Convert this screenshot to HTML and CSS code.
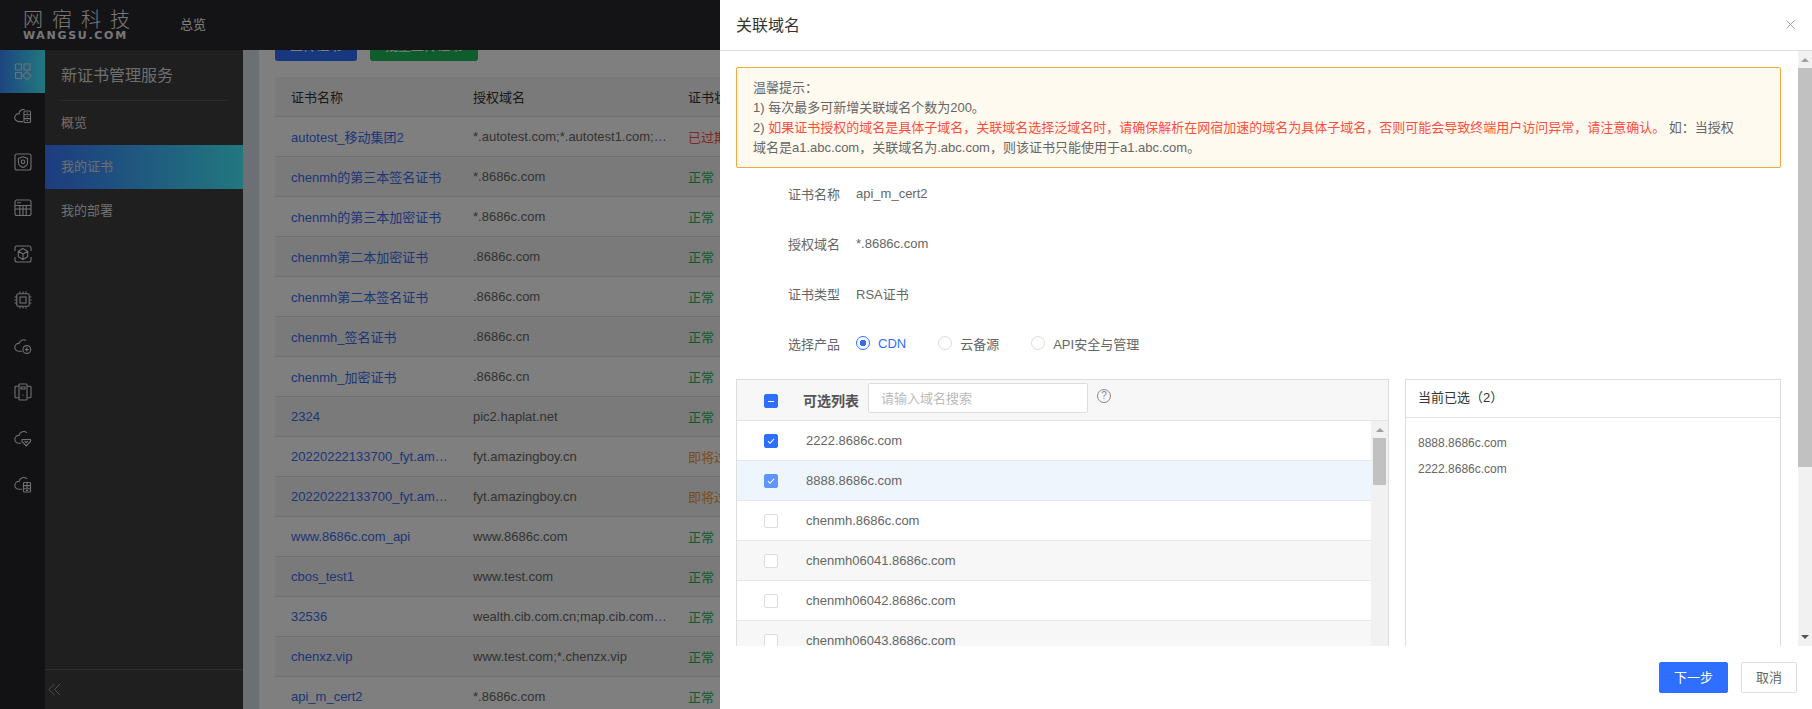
FILE: index.html
```html
<!DOCTYPE html>
<html lang="zh-CN">
  <head>
    <meta charset="UTF-8" />
    <title>关联域名</title>
    <link rel="stylesheet" href="styles.css">
  </head>
  <body>
    <div class="topbar">
      <div class="logo">
        <div class="logo-cn">网宿科技</div>
        <div class="logo-en">WANGSU.COM</div>
      </div>
      <div class="top-link">总览</div>
    </div>

    <div class="layout">
      <!-- Icon rail -->
      <div class="rail">
        <div class="rail-item active">
          <svg viewBox="0 0 18 18"><rect x="1.5" y="1" width="6" height="6" rx=".6"/><rect x="10" y="1" width="6" height="6" rx=".6"/><rect x="1.5" y="9.5" width="6" height="6" rx=".6"/><path d="M13 8.6l4.2 4.2-4.2 4.2-4.2-4.2z"/></svg>
        </div>
        <div class="rail-item">
          <svg viewBox="0 0 18 18"><path d="M10.5 2.6A4.4 4.4 0 0 0 5 6.6a4 4 0 0 0-.6 8H9"/><rect x="10" y="4" width="6.5" height="11.5" rx="1"/><path d="M10 7.8h6.5M10 11.6h6.5M12.5 6h1.5M12.5 9.7h1.5M12.5 13.5h1.5"/></svg>
        </div>
        <div class="rail-item">
          <svg viewBox="0 0 18 18"><rect x="1" y="1" width="16" height="16" rx="2"/><path d="M9 3.8l4.6 1.6v3.8c0 2.6-2 4.2-4.6 5.2-2.6-1-4.6-2.6-4.6-5.2V5.4z"/><circle cx="9" cy="8.8" r="1.8"/></svg>
        </div>
        <div class="rail-item">
          <svg viewBox="0 0 18 18"><rect x="1" y="1" width="16" height="15.5" rx="2"/><path d="M1 6.5h16M1 10h16M3 3.7h4M5.8 6.5v10M9 6.5v10M12.2 6.5v10"/></svg>
        </div>
        <div class="rail-item">
          <svg viewBox="0 0 18 18"><path d="M1 6V3a2 2 0 0 1 2-2h12a2 2 0 0 1 2 2v3M1 12v3a2 2 0 0 0 2 2h12a2 2 0 0 0 2-2v-3"/><path d="M9 3.5l4.7 2.7v5.5L9 14.5l-4.7-2.8V6.2zM4.3 6.2L9 9l4.7-2.8M9 9v5.5"/></svg>
        </div>
        <div class="rail-item">
          <svg viewBox="0 0 18 18"><rect x="2.8" y="2.8" width="12.4" height="12.4" rx="1.5"/><rect x="6" y="6" width="6" height="6"/><path d="M6 .5v2.3M9 .5v2.3M12 .5v2.3M6 15.2v2.3M9 15.2v2.3M12 15.2v2.3M.5 6h2.3M.5 9h2.3M.5 12h2.3M15.2 6h2.3M15.2 9h2.3M15.2 12h2.3"/></svg>
        </div>
        <div class="rail-item">
          <svg viewBox="0 0 18 18"><path d="M12 3.4A4.8 4.8 0 0 0 5 6.4a3.9 3.9 0 0 0-.5 7.8H8"/><circle cx="12.8" cy="12.5" r="3.9"/><path d="M12.8 10.5v4M10.8 12.5h4"/></svg>
        </div>
        <div class="rail-item">
          <svg viewBox="0 0 18 18"><rect x="5" y="1" width="8" height="16" rx=".8"/><path d="M5 3.2H2a1 1 0 0 0-1 1v9.6a1 1 0 0 0 1 1h3M13 3.2h3a1 1 0 0 1 1 1v9.6a1 1 0 0 1-1 1h-3"/><path d="M7 4h4v2H7zM9 11.5v1"/></svg>
        </div>
        <div class="rail-item">
          <svg viewBox="0 0 18 18"><path d="M13 3.8A4.8 4.8 0 0 0 5 6.4a3.9 3.9 0 0 0-.5 7.8H7"/><path d="M8 10.5h8.500v2L12.200 17 8 12.500zM10.600 11.800l1.600 1.800 1.700-1.800"/></svg>
        </div>
        <div class="rail-item">
          <svg viewBox="0 0 18 18"><path d="M13 3.8A4.8 4.8 0 0 0 5 6.4a3.9 3.9 0 0 0-.5 7.8H8"/><rect x="9.5" y="7.5" width="7" height="9.5" rx=".8"/><path d="M9.5 10.6h7M9.5 13.8h7M12 9h2M12 12.2h2M12 15.4h2"/></svg>
        </div>
      </div>

      <!-- Service menu -->
      <div class="side">
        <div class="side-title">新证书管理服务</div>
        <div class="side-items">
          <div class="side-item">概览</div>
          <div class="side-item active">我的证书</div>
          <div class="side-item">我的部署</div>
        </div>
        <div class="side-foot">
          <svg viewBox="0 0 14 14"><path d="M7 1L1 7l6 6M13 1L7 7l6 6"/></svg>
        </div>
      </div>

      <!-- Certificate list behind the drawer -->
      <div class="main">
        <div class="card">
          <div class="toolbar">
            <div class="tool-btn blue">上传证书</div>
            <div class="tool-btn green">批量上传证书</div>
          </div>
          <table class="cert-table">
            <colgroup>
              <col class="col-name" />
              <col class="col-domain" />
              <col />
            </colgroup>
            <thead>
              <tr><th>证书名称</th><th>授权域名</th><th>证书状态</th></tr>
            </thead>
            <tbody>
              <tr><td class="link">autotest_移动集团2</td><td>*.autotest.com;*.autotest1.com;*.autotest2.com</td><td class="bad">已过期</td></tr>
              <tr><td class="link">chenmh的第三本签名证书</td><td>*.8686c.com</td><td class="ok">正常</td></tr>
              <tr><td class="link">chenmh的第三本加密证书</td><td>*.8686c.com</td><td class="ok">正常</td></tr>
              <tr><td class="link">chenmh第二本加密证书</td><td>.8686c.com</td><td class="ok">正常</td></tr>
              <tr><td class="link">chenmh第二本签名证书</td><td>.8686c.com</td><td class="ok">正常</td></tr>
              <tr><td class="link">chenmh_签名证书</td><td>.8686c.cn</td><td class="ok">正常</td></tr>
              <tr><td class="link">chenmh_加密证书</td><td>.8686c.cn</td><td class="ok">正常</td></tr>
              <tr><td class="link">2324</td><td>pic2.haplat.net</td><td class="ok">正常</td></tr>
              <tr><td class="link">20220222133700_fyt.amazingboy.cn</td><td>fyt.amazingboy.cn</td><td class="warn">即将过期</td></tr>
              <tr><td class="link">20220222133700_fyt.amazingboy.cn</td><td>fyt.amazingboy.cn</td><td class="warn">即将过期</td></tr>
              <tr><td class="link">www.8686c.com_api</td><td>www.8686c.com</td><td class="ok">正常</td></tr>
              <tr><td class="link">cbos_test1</td><td>www.test.com</td><td class="ok">正常</td></tr>
              <tr><td class="link">32536</td><td>wealth.cib.com.cn;map.cib.com.cn;www.cib.com.cn</td><td class="ok">正常</td></tr>
              <tr><td class="link">chenxz.vip</td><td>www.test.com;*.chenzx.vip</td><td class="ok">正常</td></tr>
              <tr><td class="link">api_m_cert2</td><td>*.8686c.com</td><td class="ok">正常</td></tr>
            </tbody>
          </table>
        </div>
      </div>
    </div>

    <div class="overlay"></div>

    <!-- Drawer -->
    <div class="drawer">
      <div class="drawer-head">
        <div class="drawer-title">关联域名</div>
        <svg class="close" viewBox="0 0 10 10"><path d="M.5.5l9 9M9.5.5l-9 9"/></svg>
      </div>

      <div class="drawer-mid">
        <div class="drawer-body">
          <div class="notice">
            温馨提示&#xFF1A;<br>
            1) 每次最多可新增关联域名个数为200。<br>
            2) <span class="notice-red">如果证书授权的域名是具体子域名&#xFF0C;关联域名选择泛域名时&#xFF0C;请确保解析在网宿加速的域名为具体子域名&#xFF0C;否则可能会导致终端用户访问异常&#xFF0C;请注意确认。</span> 如&#xFF1A;当授权<br>
            域名是a1.abc.com&#xFF0C;关联域名为.abc.com&#xFF0C;则该证书只能使用于a1.abc.com。
          </div>

          <div class="form-row"><div class="form-label">证书名称</div><div>api_m_cert2</div></div>
          <div class="form-row"><div class="form-label">授权域名</div><div>*.8686c.com</div></div>
          <div class="form-row"><div class="form-label">证书类型</div><div>RSA证书</div></div>
          <div class="form-row">
            <div class="form-label">选择产品</div>
            <div class="radio-group">
              <div class="radio on"><span class="radio-dot"></span>CDN</div>
              <div class="radio"><span class="radio-dot"></span>云备源</div>
              <div class="radio"><span class="radio-dot"></span>API安全与管理</div>
            </div>
          </div>

          <div class="pickers">
            <div class="picker-left">
              <div class="picker-head">
                <span class="check minus"></span>
                <span class="picker-name">可选列表</span>
                <input class="search" placeholder="请输入域名搜索" />
                <span class="help">?</span>
              </div>
              <div class="picker-list">
                <div class="rows">
                  <div class="row"><span class="check on"><svg viewBox="0 0 14 14"><path d="M3.5 7.2l2.4 2.4 4.6-5"/></svg></span>2222.8686c.com</div>
                  <div class="row hover"><span class="check on soft"><svg viewBox="0 0 14 14"><path d="M3.5 7.2l2.4 2.4 4.6-5"/></svg></span>8888.8686c.com</div>
                  <div class="row"><span class="check"></span>chenmh.8686c.com</div>
                  <div class="row gray"><span class="check"></span>chenmh06041.8686c.com</div>
                  <div class="row"><span class="check"></span>chenmh06042.8686c.com</div>
                  <div class="row gray"><span class="check"></span>chenmh06043.8686c.com</div>
                </div>
                <div class="list-bar">
                  <span class="arrow-up"></span>
                  <span class="list-thumb"></span>
                </div>
              </div>
            </div>

            <div class="picker-right">
              <div class="picked-head">当前已选&#xFF08;2&#xFF09;</div>
              <div class="picked-list">
                <div>8888.8686c.com</div>
                <div>2222.8686c.com</div>
              </div>
            </div>
          </div>
        </div>

        <div class="drawer-bar">
          <span class="arrow-up"></span>
          <span class="drawer-thumb"></span>
          <span class="arrow-down"></span>
        </div>
      </div>

      <div class="drawer-foot">
        <div class="btn primary">下一步</div>
        <div class="btn">取消</div>
      </div>
    </div>
  </body>
</html>
```

FILE: styles.css
```css
* {
  box-sizing: border-box;
}

html,
body {
  height: 100%;
}

body {
  margin: 0;
  overflow: hidden;
  display: flex;
  flex-direction: column;
  font-family: "Liberation Sans", "Noto Sans CJK SC", sans-serif;
  font-size: 13px;
  color: #666;
  background-color: #fff;
}

/* Top bar */
.topbar {
  height: 50px;
  flex-shrink: 0;
  display: flex;
  align-items: center;
  background-color: #28282c;
  color: #fff;
}

.logo {
  width: 180px;
  padding-left: 23px;
}

.logo-cn {
  font-size: 20px;
  font-weight: 300;
  line-height: 20px;
  letter-spacing: 9px;
  color: #eee;
  white-space: nowrap;
}

.logo-en {
  font-family: "DejaVu Sans", sans-serif;
  font-size: 11px;
  font-weight: bold;
  line-height: 11px;
  letter-spacing: 1.7px;
  color: #eee;
  white-space: nowrap;
}

.top-link {
  margin-bottom: 3px;
  font-size: 13px;
}

.layout {
  flex: 1;
  min-height: 0;
  display: flex;
}

/* Icon rail */
.rail {
  width: 45px;
  flex-shrink: 0;
  background-color: #242428;
}

.rail-item {
  height: 46px;
  display: flex;
  align-items: center;
  justify-content: center;
}

.rail-item.active {
  height: 43px;
  background: linear-gradient(90deg, #3a8cff, #44f0ff);
}

.rail-item svg {
  width: 18px;
  height: 18px;
  fill: none;
  stroke: #e0e0e0;
  stroke-width: 1.1;
}

/* Service menu */
.side {
  width: 198px;
  flex-shrink: 0;
  display: flex;
  flex-direction: column;
  background-color: #3e3e3e;
  color: #ddd;
}

.side-title {
  height: 51px;
  margin: 0 16px;
  border-bottom: 1px solid #585858;
  font-size: 16px;
  line-height: 51px;
}

.side-items {
  flex: 1;
}

.side-item {
  height: 44px;
  padding-left: 16px;
  font-size: 13px;
  line-height: 44px;
}

.side-item.active {
  background: linear-gradient(90deg, #3a78ff, #44f0ff);
}

.side-foot {
  height: 40px;
  padding: 13px 0 0 3px;
  border-top: 1px solid #585858;
}

.side-foot svg {
  display: block;
  width: 13px;
  height: 13px;
  fill: none;
  stroke: #aaa;
  stroke-width: 1;
}

/* Certificate list */
.main {
  flex: 1;
  min-width: 0;
  padding-left: 16px;
  overflow: hidden;
  background: linear-gradient(90deg, #d8dfe8, #e8ecf0);
}

.card {
  margin-top: -19px;
  padding: 0 16px;
  background-color: #fff;
}

.toolbar {
  display: flex;
  gap: 13px;
  margin-bottom: 16px;
}

.tool-btn {
  height: 30px;
  border-radius: 3px;
  color: #fff;
  text-align: center;
  line-height: 30px;
}

.tool-btn.blue {
  width: 82px;
  background-color: #2e6fff;
}

.tool-btn.green {
  width: 108px;
  background-color: #1fb85a;
}

.cert-table {
  width: 100%;
  table-layout: fixed;
  border-collapse: separate;
  border-spacing: 0;
}

.col-name {
  width: 182px;
}

.col-domain {
  width: 215px;
}

.cert-table th,
.cert-table td {
  height: 40px;
  padding: 0 6px 0 16px;
  border-bottom: 1px solid #e0e0e0;
  font-weight: normal;
  text-align: left;
  white-space: nowrap;
  overflow: hidden;
  text-overflow: ellipsis;
}

.cert-table td:nth-child(2) {
  padding-right: 2px;
}

.cert-table th {
  background-color: #f5f5f5;
  color: #333;
}

.cert-table tbody tr:nth-child(even) td {
  background-color: #f5f5f5;
}

.cert-table .link {
  color: #3a6cf0;
}

.cert-table .ok {
  color: #22b45c;
}

.cert-table .bad {
  color: #ff4d3c;
}

.cert-table .warn {
  color: #f09a30;
}

/* Dim layer under the drawer */
.overlay {
  position: fixed;
  top: 0;
  left: 0;
  right: 0;
  bottom: 0;
  background-color: rgba(0, 0, 0, 0.5);
}

/* Drawer */
.drawer {
  position: fixed;
  top: 0;
  right: 0;
  bottom: 0;
  width: 1092px;
  display: flex;
  flex-direction: column;
  background-color: #fff;
}

.drawer-head {
  height: 51px;
  flex-shrink: 0;
  display: flex;
  align-items: center;
  justify-content: space-between;
  padding: 0 17px 2px 16px;
  border-bottom: 1px solid #ddd;
}

.drawer-title {
  font-size: 16px;
  color: #333;
}

.close {
  width: 9px;
  height: 9px;
  fill: none;
  stroke: #999;
  stroke-width: 1;
}

.drawer-mid {
  flex: 1;
  min-height: 0;
  display: flex;
}

.drawer-body {
  flex: 1;
  min-width: 0;
  padding: 16px 17px 0 16px;
  overflow: hidden;
}

.drawer-bar {
  width: 14px;
  flex-shrink: 0;
  display: flex;
  flex-direction: column;
  align-items: center;
  background-color: #f1f1f1;
}

.drawer-thumb {
  width: 14px;
  height: 399px;
  margin-top: 6px;
  background-color: #c1c1c1;
}

.arrow-up,
.arrow-down {
  width: 0;
  height: 0;
  border-left: 4px solid transparent;
  border-right: 4px solid transparent;
}

.arrow-up {
  margin-top: 7px;
  border-bottom: 4px solid #a0a0a0;
}

.arrow-down {
  margin-top: auto;
  margin-bottom: 7px;
  border-top: 4px solid #555;
}

.notice {
  height: 101px;
  padding: 10px 16px 0;
  border: 1px solid #f5a93c;
  border-radius: 2px;
  background-color: #fffaf0;
  line-height: 20px;
}

.notice-red {
  color: #ff4d3c;
}

.form-row {
  height: 50px;
  display: flex;
  align-items: center;
  padding-left: 52px;
}

.form-label {
  width: 68px;
}

.radio-group {
  display: flex;
}

.radio {
  display: flex;
  align-items: center;
  margin-right: 32px;
}

.radio-dot {
  width: 14px;
  height: 14px;
  margin-right: 8px;
  border: 1px solid #ddd;
  border-radius: 50%;
}

.radio.on {
  color: #2e6fff;
}

.radio.on .radio-dot {
  border-color: #2e6fff;
  background: radial-gradient(circle, #2e6fff 3px, #fff 3.5px);
}

.pickers {
  display: flex;
  gap: 16px;
  margin-top: 11px;
  height: 320px;
}

.picker-left {
  width: 653px;
  flex-shrink: 0;
  border: 1px solid #ddd;
}

.picker-head {
  height: 41px;
  display: flex;
  align-items: center;
  padding-left: 27px;
  border-bottom: 1px solid #e4e4e4;
  background-color: #f7f7f7;
}

.picker-head .check {
  margin-top: 2px;
}

.picker-name {
  width: 65px;
  margin-left: 25px;
  font-size: 14px;
  font-weight: bold;
  color: #555;
}

.search {
  width: 220px;
  height: 30px;
  margin-bottom: 4px;
  padding: 0 12px;
  border: 1px solid #ddd;
  border-radius: 2px;
  outline: none;
  background-color: #fff;
  font-family: inherit;
  font-size: 13px;
}

.search::placeholder {
  color: #bbb;
}

.help {
  width: 14px;
  height: 14px;
  margin: 0 0 8px 9px;
  border: 1px solid #888;
  border-radius: 50%;
  font-size: 10px;
  line-height: 12px;
  text-align: center;
  color: #888;
}

.picker-list {
  display: flex;
}

.rows {
  flex: 1;
  min-width: 0;
}

.row {
  height: 40px;
  display: flex;
  align-items: center;
  padding-left: 27px;
  border-bottom: 1px solid #e8e8e8;
}

.row.hover {
  background-color: #eef5fd;
}

.row.gray {
  background-color: #f7f7f7;
}

.check {
  width: 14px;
  height: 14px;
  flex-shrink: 0;
  display: block;
  border: 1px solid #ddd;
  border-radius: 2px;
  background-color: #fff;
}

.row .check {
  margin-right: 28px;
}

.check.on,
.check.minus {
  border-color: #2e6fff;
  background-color: #2e6fff;
}

.check.soft {
  border-color: #5f95ff;
  background-color: #5f95ff;
}

.check svg {
  display: block;
  width: 12px;
  height: 12px;
  fill: none;
  stroke: #fff;
  stroke-width: 1.2;
}

.check.minus {
  padding: 5px 3px 0;
}

.check.minus::before {
  content: "";
  display: block;
  height: 1px;
  margin-top: 0.5px;
  background-color: #fff;
}

.list-bar {
  width: 17px;
  flex-shrink: 0;
  display: flex;
  flex-direction: column;
  align-items: center;
  background-color: #f1f1f1;
}

.list-thumb {
  width: 13px;
  height: 47px;
  margin-top: 6px;
  background-color: #c1c1c1;
}

.picker-right {
  flex: 1;
  min-width: 0;
  border: 1px solid #ddd;
}

.picked-head {
  height: 38px;
  padding-left: 12px;
  border-bottom: 1px solid #e4e4e4;
  line-height: 36px;
  color: #333;
}

.picked-list {
  padding: 12px 12px 0;
  font-size: 12px;
  line-height: 26px;
}

.drawer-foot {
  height: 63px;
  flex-shrink: 0;
  display: flex;
  justify-content: flex-end;
  gap: 13px;
  padding: 16px 15px 0 0;
}

.btn {
  width: 56px;
  height: 31px;
  border: 1px solid #ddd;
  border-radius: 2px;
  text-align: center;
  line-height: 29px;
}

.btn.primary {
  width: 69px;
  border-color: #2e6fff;
  background-color: #2e6fff;
  color: #fff;
}
```
